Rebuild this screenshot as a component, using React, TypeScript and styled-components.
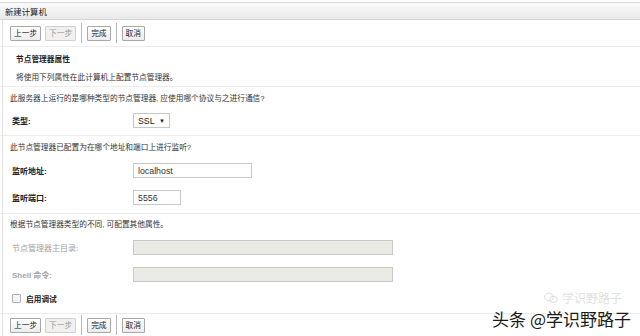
import React from 'react';
import styled, { createGlobalStyle } from 'styled-components';

const GlobalStyle = createGlobalStyle`
  html, body {
    margin: 0;
    padding: 0;
    background: #fff;
  }
  body {
    font-family: "Noto Sans CJK SC", "Liberation Sans", sans-serif;
  }
`;

const FONT = `"Liberation Sans", "Noto Sans CJK SC", sans-serif`;

const Page = styled.div`
  position: relative;
  width: 640px;
  height: 336px;
  overflow: hidden;
  background: #fff;
  font-family: ${FONT};
  font-size: 7.7px;
  color: #333;
  &::before {
    content: "";
    position: absolute;
    left: 2px;
    top: 19px;
    bottom: 0;
    width: 1px;
    background: #e2e2e2;
  }
`;

const TitleBar = styled.div`
  height: 16px;
  margin-top: 2px;
  border-top: 1px solid #d8d8d8;
  border-bottom: 1px solid #d4d4d4;
  background: linear-gradient(#fafafa, #e9e9e9);
  display: flex;
  align-items: center;
  padding-left: 5px;
  font-size: 8.4px;
  color: #222;
`;

const ButtonBar = styled.div<{ $bottom?: boolean }>`
  height: ${p => (p.$bottom ? 22 : 26)}px;
  display: flex;
  align-items: center;
  padding-left: 10px;
  gap: 4px;
  border-bottom: ${p => (p.$bottom ? 'none' : '1px solid #ececec')};
`;

const Button = styled.button<{ $disabled?: boolean }>`
  height: 15px;
  padding: 0 3px;
  margin: 0;
  font-family: ${FONT};
  font-size: 7.7px;
  line-height: 13px;
  color: ${p => (p.$disabled ? '#999' : '#222')};
  border: 1px solid ${p => (p.$disabled ? '#d0d0d0' : '#a8a8a8')};
  border-radius: 1px;
  background: ${p => (p.$disabled ? '#f0f0f0' : 'linear-gradient(#ffffff, #ececec)')};
`;

const Sep = styled.span`
  width: 1px;
  height: 20px;
  background: #b8b8b8;
  margin: 0 1px;
`;

const Section = styled.div<{ $h: number }>`
  height: ${p => p.$h}px;
  box-sizing: border-box;
  border-bottom: 1px solid #ececec;
  display: flex;
  flex-direction: column;
`;

const Heading = styled.div`
  margin: 7px 0 0 16px;
  font-weight: bold;
  color: #222;
  line-height: 11px;
`;

const Desc = styled.div<{ $top: number; $left?: number }>`
  margin: ${p => p.$top}px 0 0 ${p => p.$left ?? 10}px;
  line-height: 11px;
  color: #333;
`;

const Row = styled.div<{ $top: number }>`
  display: flex;
  align-items: center;
  margin-top: ${p => p.$top}px;
  height: 15px;
`;

const Label = styled.span<{ $muted?: boolean; $bold?: boolean }>`
  width: 121px;
  padding-left: 12px;
  font-size: 8px;
  font-weight: ${p => (p.$muted && !p.$bold ? 'normal' : 'bold')};
  color: ${p => (p.$muted ? '#a3a3a3' : '#222')};
`;

const Select = styled.div`
  width: 37px;
  height: 15px;
  box-sizing: border-box;
  border: 1px solid #c8c8c8;
  display: flex;
  align-items: center;
  justify-content: space-between;
  padding: 0 4px;
  font-family: ${FONT};
  font-size: 8.8px;
  color: #222;
  background: #fff;
`;

const Arrow = styled.span`
  font-size: 6px;
`;

const Input = styled.div<{ $w: number; $disabled?: boolean }>`
  width: ${p => p.$w}px;
  height: 15px;
  box-sizing: border-box;
  border: 1px solid #c9c9c9;
  background: ${p => (p.$disabled ? '#ebebe6' : '#fff')};
  padding-left: 4px;
  display: flex;
  align-items: center;
  font-size: 8.8px;
  color: #333;
`;

const CheckRow = styled.div`
  display: flex;
  align-items: center;
  gap: 5px;
  margin: 11px 0 0 12px;
  font-weight: bold;
  color: #222;
`;

const Box = styled.span`
  width: 7px;
  height: 7px;
  border: 1px solid #b0b0b0;
  background: #f4f4f4;
  border-radius: 1px;
`;

const Watermark = styled.div`
  position: absolute;
  right: 9px;
  bottom: 9px;
  font-family: "Noto Sans CJK SC", sans-serif;
  font-size: 17px;
  line-height: 17px;
  color: #1a1a1a;
  text-shadow: 1px 1px 0 #fff, -1px -1px 0 #fff, 1px -1px 0 #fff, -1px 1px 0 #fff;
`;

const WatermarkFaint = styled.div`
  position: absolute;
  right: 18px;
  bottom: 32px;
  font-family: "Noto Sans CJK SC", sans-serif;
  font-size: 12px;
  line-height: 12px;
  color: #e2e2e2;
  display: flex;
  align-items: center;
  gap: 4px;
`;

const Buttons = ({ bottom }: { bottom?: boolean }) => (
  <ButtonBar $bottom={bottom}>
    <Button>上一步</Button>
    <Button $disabled>下一步</Button>
    <Sep />
    <Button>完成</Button>
    <Sep />
    <Button>取消</Button>
  </ButtonBar>
);

export default function App() {
  return (
    <>
      <GlobalStyle />
      <Page>
        <TitleBar>新建计算机</TitleBar>
        <Buttons />
        <Section $h={40}>
          <Heading>节点管理器属性</Heading>
          <Desc $top={7} $left={16}>将使用下列属性在此计算机上配置节点管理器。</Desc>
        </Section>
        <Section $h={49}>
          <Desc $top={6}>此服务器上运行的是哪种类型的节点管理器, 应使用哪个协议与之进行通信?</Desc>
          <Row $top={9}>
            <Label>类型:</Label>
            <Select>SSL <Arrow>▼</Arrow></Select>
          </Row>
        </Section>
        <Section $h={78}>
          <Desc $top={6}>此节点管理器已配置为在哪个地址和端口上进行监听?</Desc>
          <Row $top={10}>
            <Label>监听地址:</Label>
            <Input $w={119}>localhost</Input>
          </Row>
          <Row $top={12}>
            <Label>监听端口:</Label>
            <Input $w={48}>5556</Input>
          </Row>
        </Section>
        <Section $h={100}>
          <Desc $top={5}>根据节点管理器类型的不同, 可配置其他属性。</Desc>
          <Row $top={10}>
            <Label $muted>节点管理器主目录:</Label>
            <Input $w={260} $disabled />
          </Row>
          <Row $top={12}>
            <Label $muted $bold>Shell 命令:</Label>
            <Input $w={260} $disabled />
          </Row>
          <CheckRow>
            <Box />
            启用调试
          </CheckRow>
        </Section>
        <Buttons bottom />
        <WatermarkFaint>
          <svg width="14" height="12" viewBox="0 0 14 12">
            <ellipse cx="5" cy="5" rx="4.5" ry="3.8" fill="none" stroke="#ddd" strokeWidth="1" />
            <ellipse cx="9.5" cy="7.5" rx="3.8" ry="3.2" fill="none" stroke="#ddd" strokeWidth="1" />
          </svg>
          学识野路子
        </WatermarkFaint>
        <Watermark>头条 @学识野路子</Watermark>
      </Page>
    </>
  );
}
